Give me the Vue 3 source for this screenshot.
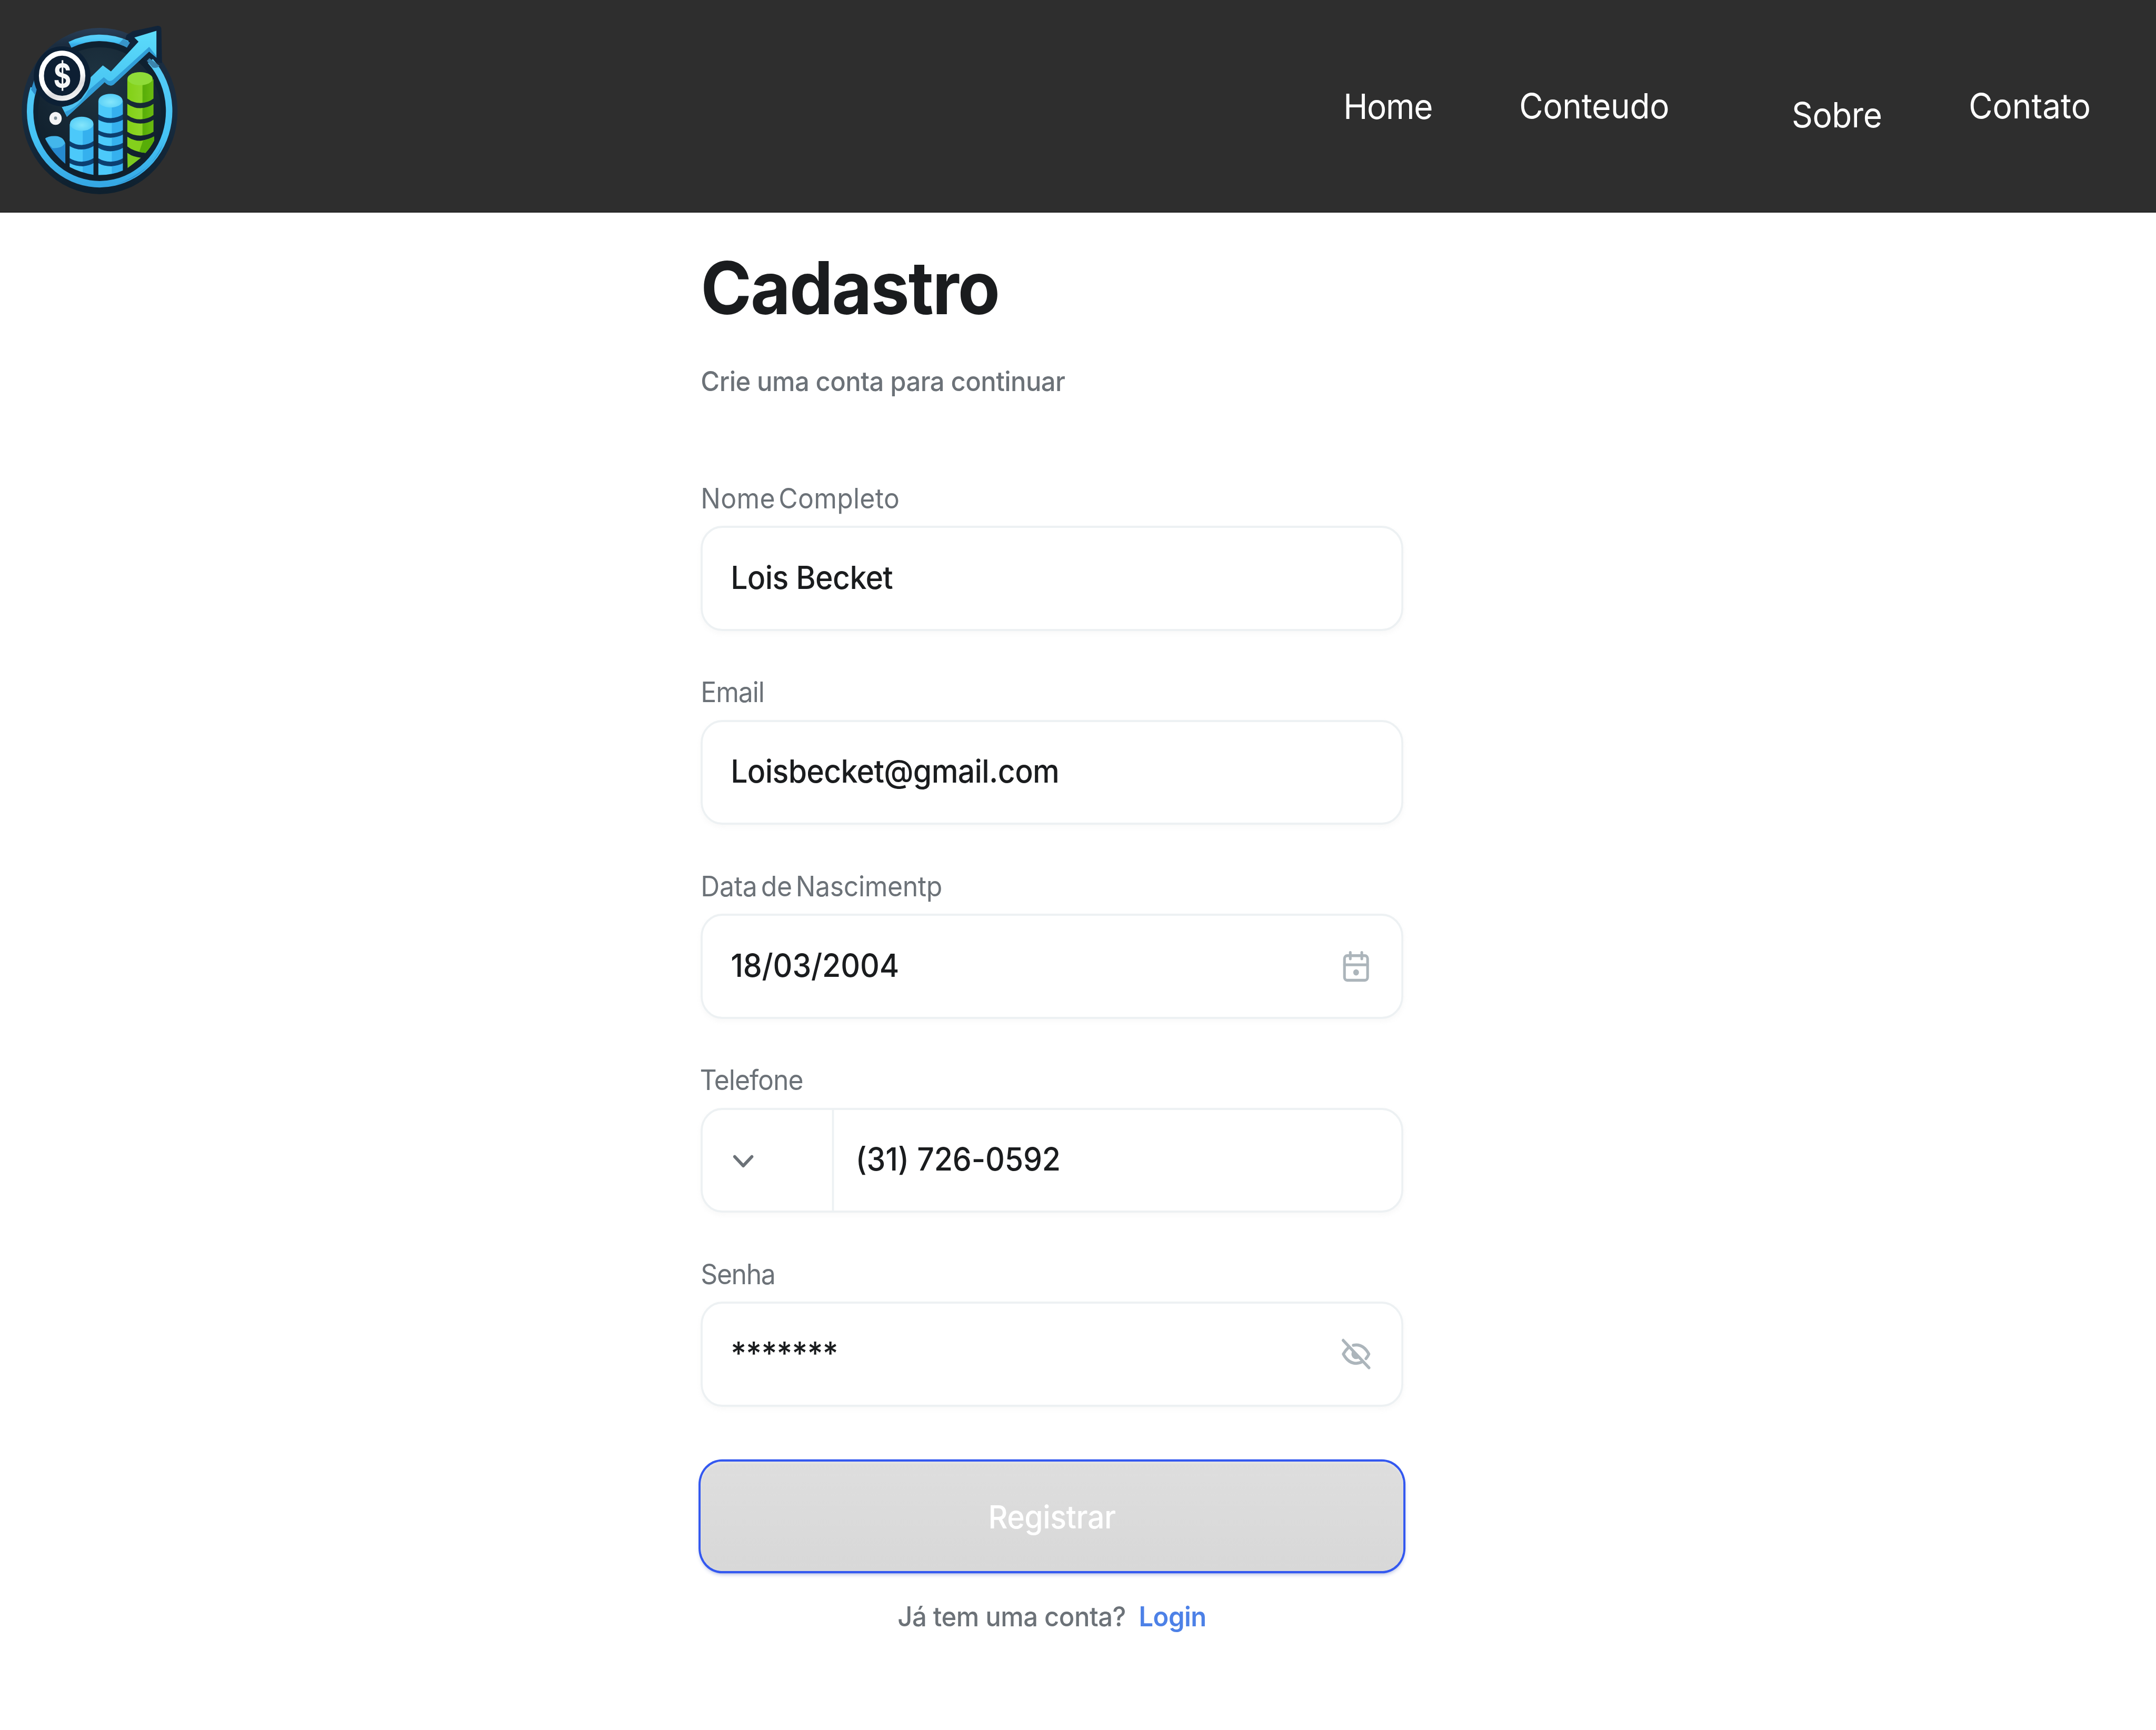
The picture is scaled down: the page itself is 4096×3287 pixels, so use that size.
<script setup>
const nav = ['Home', 'Conteudo', 'Sobre', 'Contato']

const fields = [
  { id: 'nome', label: 'Nome Completo', value: 'Lois Becket' },
  { id: 'email', label: 'Email', value: 'Loisbecket@gmail.com' },
  { id: 'data', label: 'Data de Nascimentp', value: '18/03/2004', icon: 'calendar' },
  { id: 'telefone', label: 'Telefone', value: '(31) 726-0592', prefix: true },
  { id: 'senha', label: 'Senha', value: '*******', icon: 'eye-off' },
]

// One curved slice of a stacked coin column: x, width, top edge, bottom edge, sag
function slice(x, w, t, b, d) {
  const m = x + w / 2
  const r = x + w
  return `M${x} ${t}Q${x + w * 0.22} ${t + d} ${m} ${t + d}Q${r - w * 0.2} ${t + d - 2} ${r} ${t}V${b}Q${r - w * 0.2} ${b + d - 2} ${m} ${b + d}Q${x + w * 0.22} ${b + d} ${x} ${b}Z`
}

const blueSlices = [
  slice(498, 170, 885, 1008, 28),
  slice(498, 170, 1043, 1130, 25),
  slice(703, 175, 718, 817, 27),
  slice(703, 175, 855, 931, 23),
  slice(703, 175, 962, 1021, 22),
  slice(703, 175, 1057, 1131, 24),
]
const greenSlices = [
  slice(910, 187, 565, 704, 32),
  slice(910, 187, 742, 822, 31),
  slice(910, 187, 855, 941, 28),
]
</script>

<template>
  <div class="page">
    <header class="bar">
      <svg class="logo" viewBox="0 0 1560 1519" preserveAspectRatio="none">
        <defs>
          <linearGradient id="disc" x1="0" y1="0" x2="0" y2="1">
            <stop offset="0" stop-color="#2a3f57" />
            <stop offset=".1" stop-color="#1b2d40" />
            <stop offset=".5" stop-color="#182c40" />
            <stop offset="1" stop-color="#0e202e" />
          </linearGradient>
          <radialGradient id="inner" cx=".5" cy=".25" r=".7">
            <stop offset="0" stop-color="#1f3442" />
            <stop offset="1" stop-color="#101f2c" />
          </radialGradient>
          <linearGradient id="ring" x1="0" y1="0" x2="0" y2="1">
            <stop offset="0" stop-color="#56cdf7" />
            <stop offset=".6" stop-color="#45c3f5" />
            <stop offset="1" stop-color="#35a8e4" />
          </linearGradient>
          <linearGradient id="arrow" x1="0" y1="0" x2="0" y2="1">
            <stop offset="0" stop-color="#5cdcfb" />
            <stop offset="1" stop-color="#3fb9ee" />
          </linearGradient>
          <linearGradient id="blue" x1="0" y1="0" x2="1" y2="0">
            <stop offset=".54" stop-color="#4cc9fa" />
            <stop offset=".56" stop-color="#35b0ee" />
          </linearGradient>
          <linearGradient id="green" x1="0" y1="0" x2="1" y2="0">
            <stop offset="0" stop-color="#82d016" />
            <stop offset=".56" stop-color="#8ed629" />
            <stop offset=".6" stop-color="#57ad08" />
            <stop offset="1" stop-color="#6abb10" />
          </linearGradient>
          <radialGradient id="cap" cx=".5" cy=".6" r=".6">
            <stop offset="0" stop-color="#85e6fb" />
            <stop offset="1" stop-color="#55cdf7" />
          </radialGradient>
          <linearGradient id="coin" x1=".3" y1="0" x2=".7" y2="1">
            <stop offset=".6" stop-color="#fff" />
            <stop offset=".8" stop-color="#dcdcde" />
            <stop offset="1" stop-color="#f2f2f2" />
          </linearGradient>
        </defs>
        <ellipse cx="712" cy="793" rx="557" ry="594" fill="url(#disc)" />
        <path d="M905 250L950 222L1125 184Q1152 184 1153 205L1158 450L1040 440L850 420Z" fill="#10243a" />
        <ellipse cx="712" cy="793" rx="472" ry="498" fill="#0f2130" />
        <ellipse cx="712" cy="810" rx="440" ry="472" fill="url(#inner)" />
        <g fill="none" stroke="url(#ring)" stroke-width="46">
          <path d="M500 320A497 523 0 0 1 910 313" />
          <path d="M1075 436A497 523 0 1 1 240 629" />
        </g>
        <path d="M880 278Q905 288 929 305L907 340Q880 325 848 314Z" fill="#3794c8" />
        <path d="M1068 415L1140 470Q1120 492 1090 482L1050 434Z" fill="#3c84ac" />
        <path d="M1180 990Q1080 1250 830 1318Q1060 1230 1145 1075Z" fill="#2b8fd0" />
        <path d="M245 570L264 632L252 680L222 640Z" fill="#2f8fcb" />
        <ellipse cx="444" cy="545" rx="203" ry="214" fill="#0c2035" />
        <path d="M1118 220L960 268L990 298L793 510L735 467L648 552Q645 640 580 705Q530 752 442 765L478 835L748 587Q790 630 820 597L1066 368L1118 412Z" fill="url(#arrow)" />
        <path d="M478 835L748 587Q790 630 820 597L1066 368L1118 412V400L1066 335L808 570Q790 585 770 575L742 552L630 648Q605 700 575 720Q530 775 465 800Z" fill="#319ed8" />
        <path d="M442 765Q530 752 580 705L640 620L600 690Q545 775 462 797Z" fill="#4fc0ee" />

        <path d="M323 990Q345 965 467 1022V1170Q370 1090 323 990Z" fill="#2589cf" />
        <path d="M323 990Q345 970 395 972Q450 975 465 1020Q445 1062 375 1058Q345 1030 323 990Z" fill="#43b6eb" />
        <path d="M498 990H668V1190H498ZM703 800H878V1190H703Z" fill="#0c3f70" />
        <path v-for="d in blueSlices" :key="d" :d="d" fill="url(#blue)" />
        <path d="M498 1166Q540 1188 593 1188Q640 1184 668 1166V1249Q570 1232 498 1193Z" fill="url(#blue)" />
        <path d="M703 1166Q740 1188 795 1188Q850 1184 878 1166V1218Q800 1252 703 1250Z" fill="url(#blue)" />
        <ellipse cx="584" cy="884" rx="84" ry="50" fill="url(#cap)" />
        <ellipse cx="790" cy="719" rx="86" ry="49" fill="url(#cap)" />
        <path v-for="d in greenSlices" :key="d" :d="d" fill="url(#green)" />
        <path d="M910 977Q950 1005 1005 1006Q1060 998 1101 975V1005Q1075 1055 1040 1092Q960 1085 910 1046Z" fill="#84d01c" />
        <path d="M1022 1004Q1065 997 1101 975V1005Q1075 1055 1040 1092L995 1086Z" fill="#57ad08" />
        <path d="M910 1092Q950 1122 1007 1127Q960 1165 912 1200Z" fill="#7bcb20" />
        <ellipse cx="1001" cy="562" rx="90" ry="47" fill="#8fdc38" />

        <ellipse cx="444" cy="541" rx="148" ry="161" fill="#0d1f33" stroke="url(#coin)" stroke-width="36" />
        <text transform="translate(446 626) scale(.84 1)" class="dollar">$</text>
        <ellipse cx="397" cy="846" rx="44" ry="46" fill="#f4f5f6" />
        <ellipse cx="397" cy="844" rx="11" ry="12" fill="#7f9099" />
      </svg>
      <nav class="menu">
        <a v-for="item in nav" :key="item" :class="['link', item.toLowerCase()]">{{ item }}</a>
      </nav>
    </header>

    <main class="form">
      <h1 class="title">Cadastro</h1>
      <p class="subtitle">Crie uma conta para continuar</p>

      <div v-for="f in fields" :key="f.id" class="group">
        <label :class="['label', f.id]">{{ f.label }}</label>
        <div class="field">
          <div v-if="f.prefix" class="prefix">
            <svg class="chevron" viewBox="0 0 12 8">
              <path d="M2 2L6 6L10 2" fill="none" stroke="#6c7278" stroke-width="1.4" stroke-linecap="round" stroke-linejoin="round" />
            </svg>
          </div>
          <span :class="['value', 'v-' + f.id]">{{ f.value }}</span>
          <svg v-if="f.icon === 'calendar'" class="icon" viewBox="0 0 16 16" fill="none" stroke="#acb5bb" stroke-width="1.25" stroke-linecap="round">
            <rect x="2.6" y="3.4" width="10.75" height="10.8" rx="1.3" />
            <path d="M2.6 7.4H13.3M5.3 2V4.8M10.65 2V4.8" />
            <circle cx="8" cy="10.75" r="1.33" fill="#acb5bb" stroke="none" />
          </svg>
          <svg v-if="f.icon === 'eye-off'" class="icon" viewBox="0 0 16 16" fill="none" stroke="#acb5bb" stroke-width="1.33" stroke-linecap="round" stroke-linejoin="round">
            <path d="M2 2L14 14" />
            <path d="M4.5 5.1Q3 6.4 2.05 8Q4.4 12.05 8 12.05Q9.7 12.05 11.1 11.2" />
            <path d="M6.7 4.15Q11.2 3.2 13.95 8Q13.4 9.1 12.6 10" />
            <path d="M6.6 6.6A1.95 1.95 0 0 0 9.4 9.4Z" fill="#acb5bb" stroke-width=".4" />
          </svg>
        </div>
      </div>

      <button class="submit"><span>Registrar</span></button>
      <p class="footer"><span>Já tem uma conta?</span><a class="login">Login</a></p>
    </main>
  </div>
</template>

<style>
body {
  margin: 0;
  background: #fff;
}
#app {
  width: 4096px;
  height: 3287px;
  overflow: hidden;
}
</style>

<style scoped>
/* The whole page is laid out slightly wide and condensed horizontally */
.page {
  width: 4351px;
  height: 3287px;
  transform: scaleX(0.9414);
  transform-origin: 0 0;
  background: #fff;
  font-family: Inter, "Liberation Sans", sans-serif;
  color: #1a1c1e;
}
.bar {
  display: flex;
  justify-content: space-between;
  height: 404px;
  background: #2e2e2e;
  box-shadow: inset 0 -2px #242424;
}
.logo {
  display: block;
  width: 440.5px;
  height: 404px;
}
.dollar {
  font: 700 232px Inter, sans-serif;
  text-anchor: middle;
  fill: #f6f7f8;
}
.menu {
  display: grid;
  grid-template-columns: 355px 550px 357px 378px;
  padding-top: 160.5px;
}
.link {
  font-size: 66px;
  font-weight: 400;
  line-height: 80px;
  color: #fff;
  white-space: nowrap;
}
.home {
  padding-top: 1.5px;
  letter-spacing: -0.02em;
}
.conteudo {
  letter-spacing: -0.005em;
}
.sobre {
  padding-top: 17px;
  letter-spacing: -0.008em;
}
.form {
  display: flex;
  flex-direction: column;
  width: 1417.5px;
  margin-left: 1414.2px;
  padding-top: 52.5px;
}
.title {
  margin: 0;
  font-size: 139px;
  font-weight: 700;
  line-height: 180px;
  letter-spacing: -0.0155em;
}
.subtitle {
  margin: 52.2px 0 69.4px;
  font-size: 52px;
  font-weight: 500;
  line-height: 72px;
  letter-spacing: -0.0115em;
  color: #6c7278;
}
.group {
  height: 292px;
  margin-top: 76.5px;
}
.label {
  display: block;
  margin: 0 0 12.8px;
  font-size: 53px;
  font-weight: 400;
  line-height: 80px;
  letter-spacing: -0.022em;
  color: #6c7278;
  white-space: nowrap;
}
.nome {
  letter-spacing: 0.006em;
  word-spacing: -0.16em;
}
.data {
  letter-spacing: -0.007em;
  word-spacing: -0.13em;
}
.telefone {
  margin-left: -2px;
  letter-spacing: -0.02em;
}
.senha {
  letter-spacing: -0.028em;
}
.field {
  display: flex;
  align-items: center;
  box-sizing: border-box;
  height: 199.2px;
  padding: 0 56.4px;
  border: 4.33px solid #edf1f3;
  border-radius: 43.3px;
  background: #fff;
  box-shadow: 0 4.3px 8.7px rgba(228, 229, 231, 0.24);
}
.value {
  flex: 1;
  padding-bottom: 3.6px;
  font-size: 60.7px;
  font-weight: 500;
  line-height: 85px;
  letter-spacing: -0.011em;
  white-space: nowrap;
}
.v-data {
  letter-spacing: -0.002em;
}
.v-telefone {
  letter-spacing: -0.002em;
}
.prefix {
  display: flex;
  align-items: center;
  box-sizing: border-box;
  align-self: stretch;
  width: 264.5px;
  margin-left: -56.4px;
  margin-right: 44px;
  padding-left: 55.5px;
  border-right: 4.33px solid #edf1f3;
}
.chevron {
  width: 52px;
  height: 34.7px;
  margin-top: 3px;
}
.icon {
  width: 69.4px;
  height: 69.4px;
}
.submit {
  display: flex;
  align-items: center;
  justify-content: center;
  height: 208.1px;
  margin-top: 104.2px;
  padding: 2.6px 0 0;
  border: 0;
  border-radius: 43.3px;
  background: linear-gradient(#dedede, #d8d8d8);
  box-shadow: 0 0 0 4.33px #3358f0, 0 4.3px 8.7px rgba(37, 62, 167, 0.48), inset 0 4px 3px rgba(255, 255, 255, 0.18);
  font-family: inherit;
  font-size: 60.7px;
  font-weight: 500;
  letter-spacing: -0.008em;
  line-height: 85px;
  color: #fff;
}
.footer {
  display: flex;
  justify-content: center;
  gap: 26px;
  margin: 50.8px 0 0;
  font-size: 52px;
  font-weight: 500;
  line-height: 72px;
  letter-spacing: -0.01em;
  color: #6c7278;
}
.login {
  font-weight: 600;
  color: #4d81e7;
}
</style>
